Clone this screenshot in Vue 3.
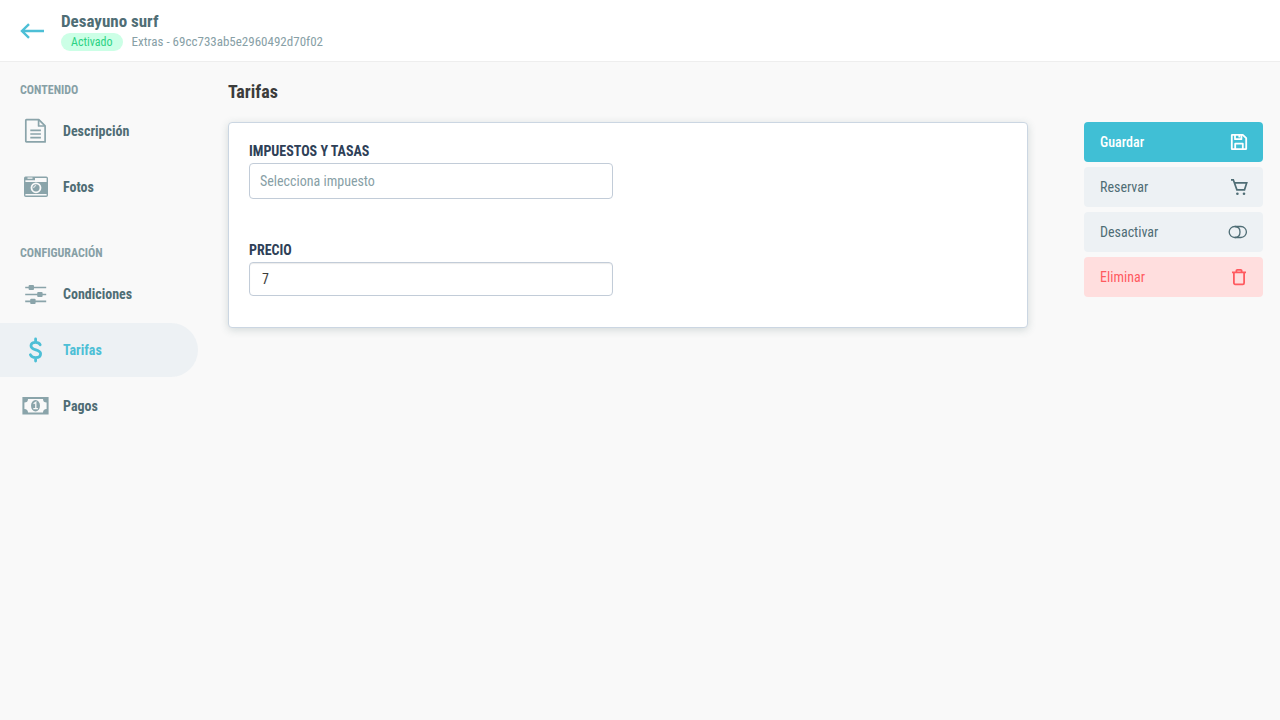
<script setup>
import { ref } from 'vue'

const title = ref('Desayuno surf')
const extraId = ref('69cc733ab5e2960492d70f02')
const current = ref('tarifas')
const tax = ref('')
const price = ref(7)

const sections = [
  {
    title: 'Contenido',
    items: [
      { id: 'descripcion', label: 'Descripción' },
      { id: 'fotos', label: 'Fotos' }
    ]
  },
  {
    title: 'Configuración',
    items: [
      { id: 'condiciones', label: 'Condiciones' },
      { id: 'tarifas', label: 'Tarifas' },
      { id: 'pagos', label: 'Pagos' }
    ]
  }
]

const actions = [
  { id: 'guardar', label: 'Guardar', type: 'primary' },
  { id: 'reservar', label: 'Reservar', type: 'default' },
  { id: 'desactivar', label: 'Desactivar', type: 'default' },
  { id: 'eliminar', label: 'Eliminar', type: 'danger' }
]
</script>

<template>
  <div class="extra-page">
    <header class="topbar">
      <a href="#" class="back" aria-label="Volver">
        <svg width="24" height="16" viewBox="0 0 24 16" fill="none" stroke="currentColor" stroke-width="2.4">
          <path d="M24 8H2M9 1.2L2 8l7 6.8" />
        </svg>
      </a>
      <div class="heading">
        <h1>{{ title }}</h1>
        <div class="meta">
          <span class="badge">Activado</span>
          <span>Extras - {{ extraId }}</span>
        </div>
      </div>
    </header>

    <div class="layout">
      <nav class="sidebar">
        <section v-for="section in sections" :key="section.title" class="nav-section">
          <h2>{{ section.title }}</h2>
          <a
            v-for="item in section.items"
            :key="item.id"
            href="#"
            :class="['nav-item', { active: current === item.id }]"
            @click.prevent="current = item.id"
          >
            <svg v-if="item.id === 'descripcion'" class="nav-icon" viewBox="0 0 28 28" fill="none" stroke="currentColor" stroke-width="1.7" stroke-linejoin="round">
              <path d="M4.4 2.6h12.4l6.300 6.300v16H4.400a.6.6 0 0 1-.6-.6V3.200a.6.6 0 0 1 .6-.6z" />
              <path d="M16.600 2.800v6.200h6.200M8.300 13.300h10.600M8.300 17h10.600M8.300 20.700h10.600" />
            </svg>
            <svg v-else-if="item.id === 'fotos'" class="nav-icon" viewBox="0 0 28 28" fill="currentColor">
              <path fill-rule="evenodd" d="M3.500 3.400h20.700a1.800 1.800 0 0 1 1.800 1.800v17a1.800 1.800 0 0 1-1.800 1.800h-20.400A1.800 1.800 0 0 1 2 22.200v-17A1.800 1.800 0 0 1 3.500 3.400zM5.500 4.600v1.200h5V4.600zM3.400 7.200v1.700h21.200V5H13v2.200zM3.400 21v1.600h21.200V21z" />
              <circle cx="14" cy="14.800" r="4.500" fill="none" stroke="#f9f9f9" stroke-width="1.800" />
              <path d="M11.700 15a2.400 2.400 0 0 1 2.400-2.400" fill="none" stroke="#f9f9f9" />
            </svg>
            <svg v-else-if="item.id === 'condiciones'" class="nav-icon" viewBox="0 0 28 28" fill="currentColor">
              <path d="M3.200 6.700h21v1.600h-21zM3.200 13.700h21v1.600h-21zM3.200 20.600h21v1.600h-21z" />
              <rect x="6.600" y="4.900" width="5.400" height="5.200" rx="1" />
              <rect x="15.200" y="11.900" width="5.400" height="5.200" rx="1" />
              <rect x="8.200" y="18.800" width="5.400" height="5.200" rx="1" />
            </svg>
            <svg v-else-if="item.id === 'tarifas'" class="nav-icon" viewBox="0 0 28 28" fill="none" stroke="currentColor" stroke-width="2.800" stroke-linecap="round" stroke-linejoin="round">
              <path d="M13.600 3v3M13.600 22v3M18.200 8.800C17.400 7 15.700 6.300 13.600 6.300c-2.700 0-4.600 1.300-4.600 3.500 0 5.300 9.600 2.900 9.600 8 0 2.400-2.100 3.900-5 3.900-2.500 0-4.300-.9-5.200-2.900" />
            </svg>
            <svg v-else class="nav-icon" viewBox="0 0 28 28" fill="currentColor">
              <path fill-rule="evenodd" d="M.4 5h26.200v17.500H.4zM6 7A3.600 3.600 0 0 1 2.400 10.600V17A3.600 3.600 0 0 1 6 20.500h15A3.600 3.600 0 0 1 24.600 17v-6.400A3.600 3.600 0 0 1 21 7z" />
              <ellipse cx="13.500" cy="13.700" rx="4.500" ry="5.700" />
              <path d="M11.600 11.700l2.200-1.500v6.500M11.300 16.700h4.600" fill="none" stroke="#f9f9f9" stroke-width="1.300" />
            </svg>
            <span>{{ item.label }}</span>
          </a>
        </section>
      </nav>

      <main class="content">
        <h2 class="page-title">Tarifas</h2>
        <div class="columns">
          <form class="card" @submit.prevent>
            <div class="field">
              <label for="tax">Impuestos y tasas</label>
              <select id="tax" v-model="tax" class="tax-select">
                <option value="">Selecciona impuesto</option>
              </select>
            </div>
            <div class="field">
              <label for="price">Precio</label>
              <input id="price" v-model="price" type="text" class="price-input" />
            </div>
          </form>

          <aside class="actions">
            <button v-for="action in actions" :key="action.id" type="button" :class="['action', action.type]">
              <span>{{ action.label }}</span>
              <svg v-if="action.id === 'guardar'" width="18" height="18" viewBox="0 0 18 18" fill="none" stroke="currentColor" stroke-width="1.800" stroke-linejoin="round">
                <path d="M2.300 1.800h10.500L16.200 5.200V15.700a.5.5 0 0 1-.5.5H2.300a.5.5 0 0 1-.5-.5V2.300a.5.5 0 0 1 .5-.5zM5 2v4.200h6.400V2M5.200 16v-5.300h7.600V16" />
                <path d="M9.300 2v2.500" />
              </svg>
              <svg v-else-if="action.id === 'reservar'" width="18" height="18" viewBox="0 0 18 18" fill="none" stroke="currentColor" stroke-width="1.700">
                <path d="M1 1.800h2.300l3.600 10h7.600l2.200-6.900H4.500" />
                <circle cx="7.400" cy="15.700" r="1.300" fill="currentColor" stroke="none" />
                <circle cx="14" cy="15.700" r="1.300" fill="currentColor" stroke="none" />
              </svg>
              <svg v-else-if="action.id === 'desactivar'" width="20" height="18" viewBox="0 0 20 18" fill="none" stroke="currentColor" stroke-width="1.300">
                <rect x="1.200" y="3.500" width="17.200" height="11" rx="5.500" />
                <path d="M7 3.500c3.400.2 5 2.600 5 5.500s-1.600 5.300-5 5.500" />
              </svg>
              <svg v-else width="18" height="18" viewBox="0 0 18 18" fill="none" stroke="currentColor" stroke-width="1.800">
                <path d="M2 4.300h14M6.400 4V2.700a.8.800 0 0 1 .8-.8h3.600a.8.800 0 0 1 .8.800V4M3.900 4.300v10.700a1.300 1.300 0 0 0 1.300 1.300h7.600a1.300 1.300 0 0 0 1.300-1.300V4.300" />
              </svg>
            </button>
          </aside>
        </div>
      </main>
    </div>
  </div>
</template>

<style>
body {
  margin: 0;
  background: #f9f9f9;
}
</style>

<style scoped>
.extra-page {
  min-height: 100vh;
  background: #f9f9f9;
  color: #4f6d75;
  font-family: "Roboto Condensed", "Liberation Sans Narrow", Roboto, sans-serif;
  font-size: 14px;
  line-height: 20px;
}

.extra-page * {
  box-sizing: border-box;
}

h1,
h2 {
  margin: 0;
}

.topbar {
  display: flex;
  align-items: center;
  gap: 17px;
  height: 62px;
  padding: 0 20px;
  background: #fff;
  border-bottom: 1px solid #eee;
}

.back {
  display: flex;
  color: #4dbfd6;
}

.heading h1 {
  margin-bottom: 2px;
  font-size: 17px;
  line-height: 20px;
}

.meta {
  display: flex;
  align-items: center;
  gap: 9px;
  color: #87a0a6;
  font-size: 13px;
  line-height: 18px;
}

.badge {
  padding: 0 10px;
  border-radius: 9px;
  background: #ccffe6;
  color: #2bd283;
  font-size: 12px;
}

.layout {
  display: flex;
  align-items: flex-start;
}

.sidebar {
  flex: none;
  width: 198px;
  padding-top: 18px;
}

.nav-section {
  margin-bottom: 29px;
}

.nav-section h2 {
  padding-left: 20px;
  margin-bottom: 4px;
  color: #87a0a6;
  font-size: 12px;
  line-height: 20px;
  text-transform: uppercase;
}

.nav-item {
  display: flex;
  align-items: center;
  gap: 13px;
  height: 54px;
  margin-bottom: 2px;
  padding-left: 22px;
  border-radius: 0 27px 27px 0;
  color: #4f6d75;
  font-weight: 700;
  text-decoration: none;
}

.nav-icon {
  width: 28px;
  height: 28px;
  color: #8aa4aa;
}

.nav-item.active {
  background: #edf1f4;
}

.nav-item.active,
.nav-item.active .nav-icon {
  color: #4dbfd6;
}

.content {
  flex: 1;
  min-width: 0;
  padding: 18px 17px 18px 30px;
}

.page-title {
  margin-bottom: 18px;
  color: #3c3c3b;
  font-size: 18px;
  line-height: 24px;
}

.columns {
  display: flex;
  align-items: flex-start;
  justify-content: space-between;
  gap: 56px;
}

.card {
  flex: 1;
  max-width: 800px;
  padding: 18px 20px 31px;
  border: 1px solid #cbd6e2;
  border-radius: 4px;
  background: #fff;
  box-shadow: 0 2px 8px rgba(55, 90, 90, 0.2);
}

.field {
  width: 48%;
}

.field + .field {
  margin-top: 41px;
}

.field label {
  display: block;
  margin-bottom: 2px;
  color: #2e4057;
  font-weight: 700;
  text-transform: uppercase;
}

.tax-select,
.price-input {
  display: block;
  width: 100%;
  border: 1px solid #c2ccd8;
  border-radius: 4px;
  background: #fff;
  font: inherit;
  outline: none;
}

.tax-select {
  height: 36px;
  padding: 0 10px;
  color: #87a0a6;
  appearance: none;
}

.price-input {
  height: 34px;
  padding: 0 12px;
  color: #3c3c3b;
  box-shadow: inset 0 1px 1px rgba(0, 0, 0, 0.08);
}

.actions {
  display: flex;
  flex: none;
  flex-direction: column;
  gap: 5px;
  width: 179px;
}

.action {
  display: flex;
  align-items: center;
  justify-content: space-between;
  height: 40px;
  padding: 0 15px 0 16px;
  border: none;
  border-radius: 4px;
  background: #edf1f4;
  color: #4f6d75;
  font: inherit;
  cursor: pointer;
}

.action.primary {
  background: #40bfd5;
  color: #fff;
  font-weight: 500;
}

.action.danger {
  background: #ffdede;
  color: #ff5a5f;
}
</style>
